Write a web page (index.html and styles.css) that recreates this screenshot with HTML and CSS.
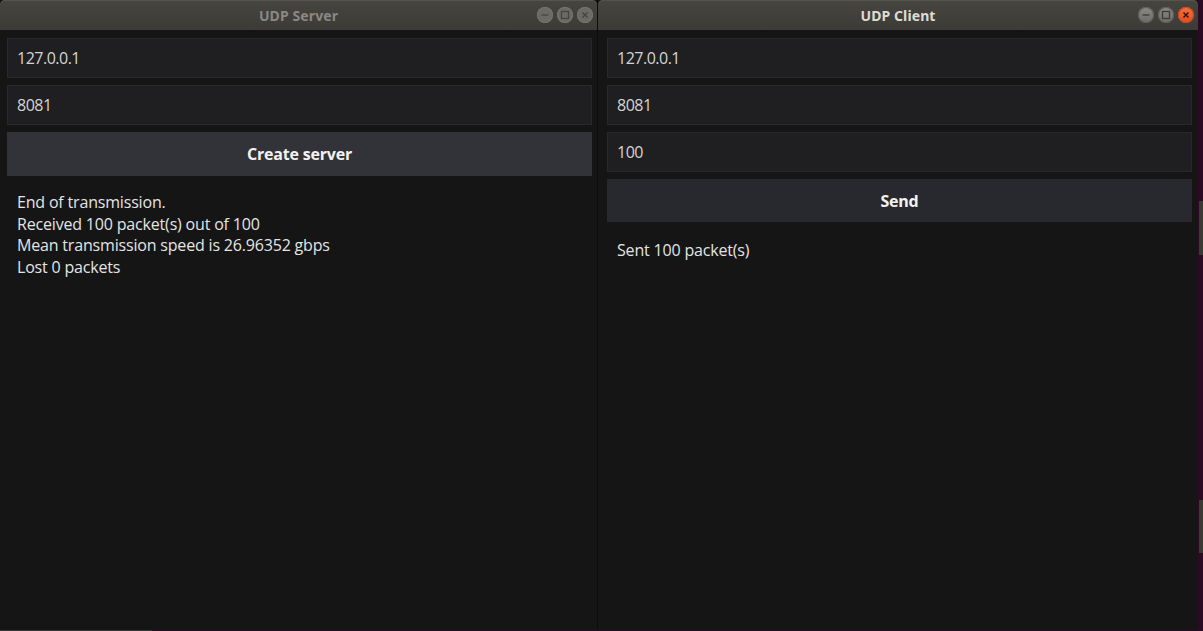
FILE: index.html
```html
<!DOCTYPE html>
<html>
<head>
<meta charset="utf-8">
<link rel="stylesheet" href="styles.css">
<title>UDP</title>
</head>
<body>
<div class="desktop">
  <div class="window inactive left">
    <div class="titlebar">
      <span class="title">UDP Server</span>
      <div class="controls">
        <span class="ctl"><svg viewBox="0 0 16 16" width="16" height="16"><line x1="4.5" y1="8" x2="11.5" y2="8"/></svg></span>
        <span class="ctl"><svg viewBox="0 0 16 16" width="16" height="16"><rect x="4.5" y="4.5" width="7" height="7"/></svg></span>
        <span class="ctl close"><svg viewBox="0 0 16 16" width="16" height="16"><path d="M5.5 5.5 L10.5 10.5 M10.5 5.5 L5.5 10.5"/></svg></span>
      </div>
    </div>
    <div class="content">
      <div class="field">127.0.0.1</div>
      <div class="field">8081</div>
      <div class="btn light">Create server</div>
      <div class="output">
        <div>End of transmission.</div>
        <div>Received 100 packet(s) out of 100</div>
        <div>Mean transmission speed is 26.96352 gbps</div>
        <div>Lost 0 packets</div>
      </div>
    </div>
  </div>
  <div class="divider"></div>
  <div class="window active right">
    <div class="titlebar">
      <span class="title">UDP Client</span>
      <div class="controls">
        <span class="ctl"><svg viewBox="0 0 16 16" width="16" height="16"><line x1="4.5" y1="8" x2="11.5" y2="8"/></svg></span>
        <span class="ctl"><svg viewBox="0 0 16 16" width="16" height="16"><rect x="4.5" y="4.5" width="7" height="7"/></svg></span>
        <span class="ctl close"><svg viewBox="0 0 16 16" width="16" height="16"><path d="M5.5 5.5 L10.5 10.5 M10.5 5.5 L5.5 10.5"/></svg></span>
      </div>
    </div>
    <div class="content">
      <div class="field">127.0.0.1</div>
      <div class="field">8081</div>
      <div class="field">100</div>
      <div class="btn">Send</div>
      <div class="output out2">
        <div>Sent 100 packet(s)</div>
      </div>
    </div>
  </div>
  <div class="edge"></div>
</div>
<div class="bottom">
  <div class="bottom-grey"></div>
</div>
</body>
</html>
```
FILE: styles.css
```css
html, body {
  margin: 0;
  padding: 0;
}
body {
  width: 1203px;
  height: 631px;
  overflow: hidden;
  background: #2c0a24;
  font-family: "Open Sans", "Noto Sans", sans-serif;
}
.desktop {
  display: flex;
  height: 630px;
}
.window {
  display: flex;
  flex-direction: column;
  height: 630px;
  background: #151515;
}
.left { width: 597px; }
.right { width: 600px; }
.divider {
  width: 1px;
  background: #0c0c0c;
}
.titlebar {
  height: 30px;
  flex: none;
  position: relative;
  display: flex;
  align-items: center;
  justify-content: center;
  background: linear-gradient(#4b4a46 0, #45443f 2px, #3c3b37 100%);
  border-radius: 5px 5px 0 0;
  box-shadow: inset 0 1px 0 #55534e;
}
.title {
  font-family: "Noto Sans", "Open Sans", sans-serif;
  font-weight: 700;
  font-size: 14px;
  letter-spacing: 0.1px;
}
.inactive .title { color: #8a8883; }
.active .title { color: #dfdbd2; }
.controls {
  position: absolute;
  right: 4px;
  top: 7px;
  display: flex;
  gap: 4px;
}
.ctl {
  width: 16px;
  height: 16px;
  border-radius: 50%;
  display: block;
}
.ctl svg {
  display: block;
  fill: none;
  stroke-width: 1.3;
}
.inactive .ctl {
  background: #6b6a66;
  box-shadow: inset 0 0 0 1px #75746f;
}
.inactive .ctl svg { stroke: #45443f; }
.active .ctl {
  background: linear-gradient(#8a8985, #6d6c68);
  box-shadow: inset 0 0 0 1px #5c5b57;
}
.active .ctl svg { stroke: #3c3b37; }
.active .ctl.close {
  background: linear-gradient(#f4703f, #e04f1c);
  box-shadow: inset 0 0 0 1px #c7481d;
}
.active .ctl.close svg { stroke: #3d1408; stroke-width: 1.5; }

.content {
  flex: 1;
  display: flex;
  flex-direction: column;
  gap: 7px;
  padding: 8px 5px 0 7px;
}
.right .content { padding: 8px 6px 0 9px; }
.field {
  height: 38px;
  display: flex;
  align-items: center;
  padding: 0 9px;
  background: #1f1f21;
  border: 1px solid #29292b;
  color: #d4d4d4;
  font-size: 16px;
  letter-spacing: -0.5px;
}
.btn {
  height: 43px;
  display: flex;
  align-items: center;
  justify-content: center;
  background: #28292e;
  color: #f2f2f2;
  font-weight: 700;
  font-size: 16px;
  letter-spacing: -0.2px;
}
.btn.light { background: #323338; height: 44px; }
.output {
  padding: 9px 10px 0 10px;
  color: #e4e4e4;
  font-size: 16px;
  line-height: 21.5px;
  letter-spacing: -0.18px;
}
.out2 { padding-top: 11px; }

.edge {
  width: 5px;
  position: relative;
  background: #2c0a24;
}
.edge::before {
  content: "";
  position: absolute;
  left: 1px;
  right: 0;
  top: 201px;
  height: 54px;
  background: #3a3a35;
}
.edge::after {
  content: "";
  position: absolute;
  left: 1px;
  right: 0;
  top: 500px;
  height: 53px;
  background: #3a3a35;
}
.bottom {
  height: 1px;
  display: flex;
  background: #2c0a24;
}
.bottom-grey {
  width: 152px;
  background: #3c3c3c;
}
```
